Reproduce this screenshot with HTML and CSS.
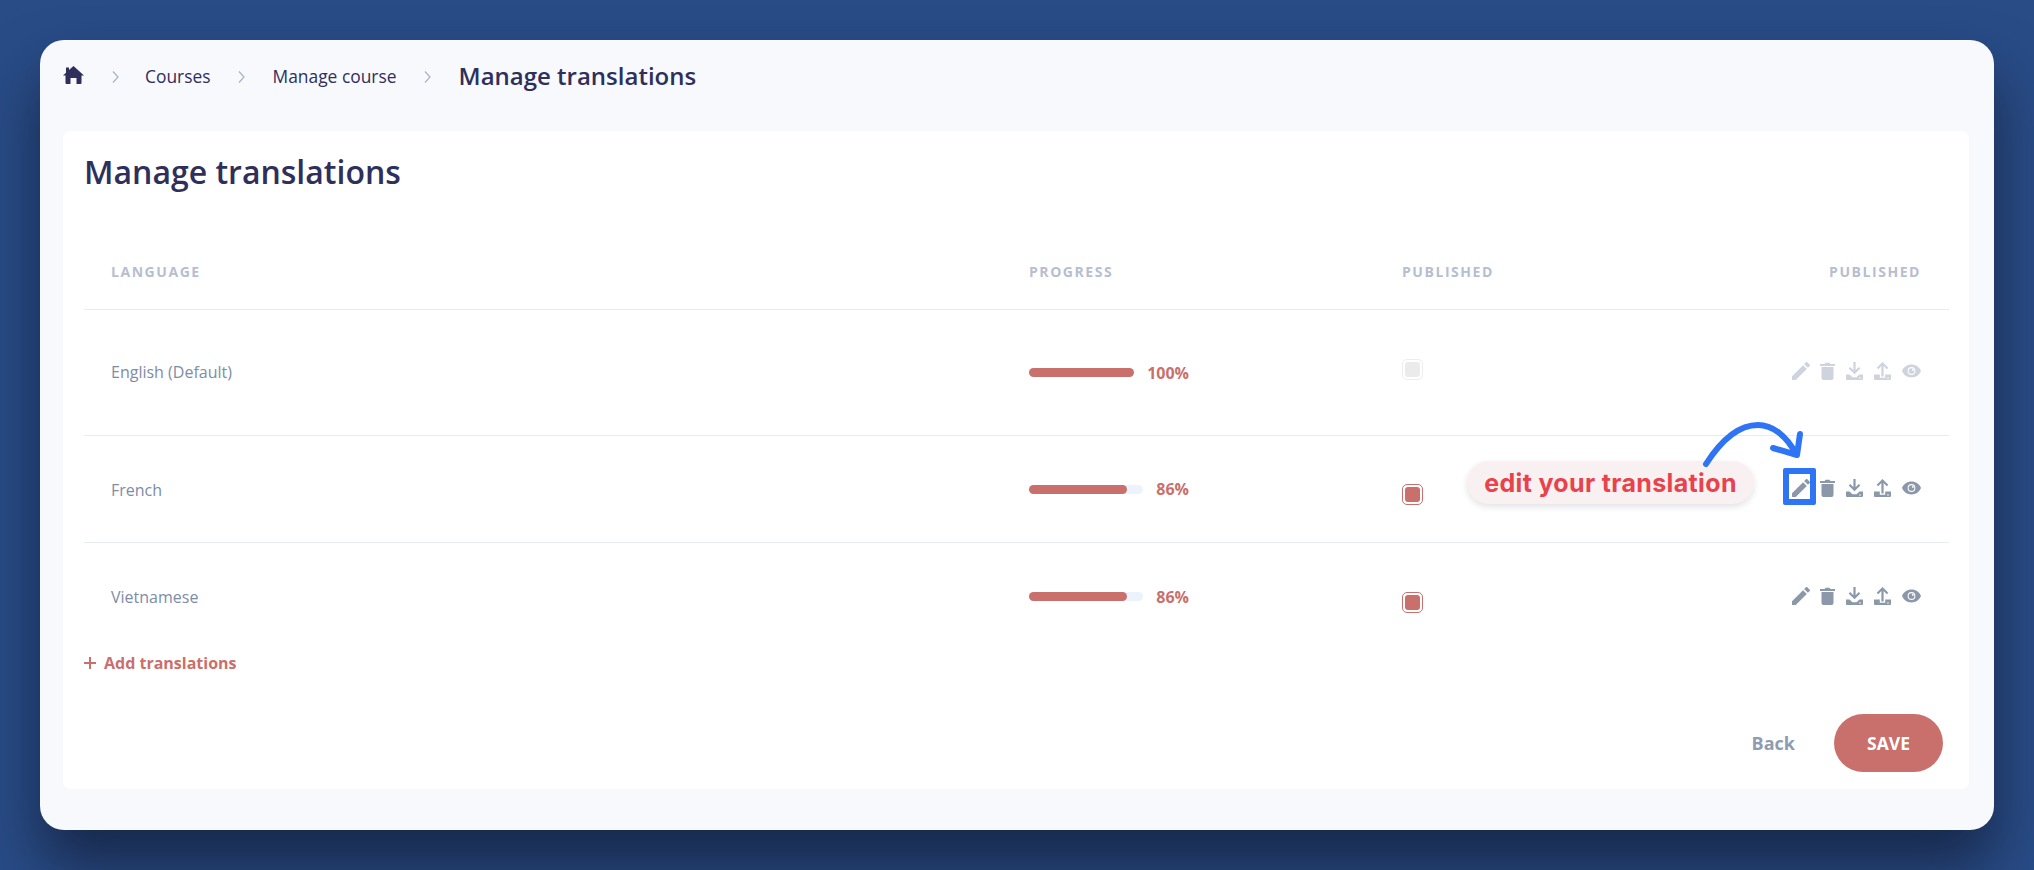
FILE: index.html
```html
<!DOCTYPE html>
<html lang="en">
<head>
<meta charset="utf-8">
<title>Manage translations</title>
<link rel="stylesheet" href="styles.css">
</head>
<body>
<svg class="defs" width="0" height="0" aria-hidden="true">
  <symbol id="i-edit" viewBox="3 3 18 18"><path d="M3 17.25V21h3.75L17.81 9.94l-3.75-3.75L3 17.25zM20.71 7.04a1 1 0 0 0 0-1.41l-2.34-2.34a1 1 0 0 0-1.41 0l-1.83 1.83 3.75 3.75 1.83-1.83z"/></symbol>
  <symbol id="i-trash" viewBox="0 0 15 18"><path d="M1.5 5h12v11a2 2 0 0 1-2 2h-8a2 2 0 0 1-2-2zM0 2h4.7l.8-1.2h4l.8 1.2H15v2H0z"/></symbol>
  <symbol id="i-down" viewBox="0 0 17 18"><path d="M7.4 0h2.2v8.2L12.8 5l1.5 1.5-5.800 5.800-5.800-5.800L4.200 5l3.200 3.200z"/><path fill-rule="evenodd" d="M0 12.500h3.500l3 2.700h4l3-2.700H17V17a1 1 0 0 1-1 1H1a1 1 0 0 1-1-1zM14 15.200a.8.8 0 1 0 0 1.600.8.8 0 0 0 0-1.600z"/></symbol>
  <symbol id="i-up" viewBox="0 0 17 18"><path d="M8.500 0l5.800 5.800-1.500 1.500-3.200-3.200v10.400H7.400V4.100L4.200 7.300 2.700 5.800z"/><path fill-rule="evenodd" d="M0 12.500h5.800v3.200h5.400v-3.200H17V17a1 1 0 0 1-1 1H1a1 1 0 0 1-1-1zM14 15.200a.8.8 0 1 0 0 1.600.8.8 0 0 0 0-1.600z"/></symbol>
  <symbol id="i-eye" viewBox="1 4.500 22 15"><path fill-rule="evenodd" d="M12 4.500C7 4.500 2.730 7.610 1 12c1.730 4.390 6 7.500 11 7.500s9.270-3.110 11-7.500c-1.730-4.390-6-7.500-11-7.500zM12 7.500a4.500 4.500 0 1 1 0 9 4.500 4.500 0 0 1 0-9z"/><path fill-rule="evenodd" d="M12 8.700a3.300 3.300 0 1 0 0 6.600 3.300 3.300 0 0 0 0-6.600zM13.500 9.600a1.100 1.100 0 1 1 0 2.200 1.100 1.100 0 0 1 0-2.200z"/></symbol>
</svg>

<main class="window">
  <nav class="crumbs">
    <svg class="home" viewBox="0 0 21 18"><path d="M10.500 0L21 9.500h-2.500V17a1 1 0 0 1-1 1h-4v-6h-6v6h-4a1 1 0 0 1-1-1V9.500H0l3-2.700V1.500h3v2.600z"/></svg>
    <svg class="chev chev-a" viewBox="0 0 7 12"><path d="M1 .5L6 6l-5 5.500"/></svg>
    <a class="crumb crumb-courses">Courses</a>
    <svg class="chev chev-b" viewBox="0 0 7 12"><path d="M1 .5L6 6l-5 5.500"/></svg>
    <a class="crumb crumb-manage">Manage course</a>
    <svg class="chev chev-c" viewBox="0 0 7 12"><path d="M1 .5L6 6l-5 5.500"/></svg>
    <span class="crumb-current">Manage translations</span>
  </nav>

  <section class="card">
    <h1 class="title">Manage translations</h1>

    <div class="row head">
      <div>LANGUAGE</div>
      <div>PROGRESS</div>
      <div>PUBLISHED</div>
      <div class="right">PUBLISHED</div>
    </div>

    <div class="row row-first">
      <div class="lang">English (Default)</div>
      <div class="progress">
        <div class="track"><div class="fill" style="width:105px"></div></div>
        <span class="pct">100%</span>
      </div>
      <div class="check check-off"><span></span></div>
      <div class="icons icons-off">
        <svg class="ic ic-edit"><use href="#i-edit"/></svg>
        <svg class="ic ic-trash"><use href="#i-trash"/></svg>
        <svg class="ic ic-down"><use href="#i-down"/></svg>
        <svg class="ic ic-up"><use href="#i-up"/></svg>
        <svg class="ic ic-eye"><use href="#i-eye"/></svg>
      </div>
    </div>

    <div class="row row-mid">
      <div class="lang">French</div>
      <div class="progress">
        <div class="track"><div class="fill" style="width:98px"></div></div>
        <span class="pct">86%</span>
      </div>
      <div class="check check-on"><span></span></div>
      <div class="icons">
        <svg class="ic ic-edit"><use href="#i-edit"/></svg>
        <svg class="ic ic-trash"><use href="#i-trash"/></svg>
        <svg class="ic ic-down"><use href="#i-down"/></svg>
        <svg class="ic ic-up"><use href="#i-up"/></svg>
        <svg class="ic ic-eye"><use href="#i-eye"/></svg>
      </div>
      <div class="pill">edit your translation</div>
      <div class="focus-box"></div>
      <svg class="arrow" viewBox="0 0 110 60"><path d="M6 47C22 22 40 8 58 8c14 0 28 10 38 29M100 17l-3 21-24-7"/></svg>
    </div>

    <div class="row row-last">
      <div class="lang">Vietnamese</div>
      <div class="progress">
        <div class="track"><div class="fill" style="width:98px"></div></div>
        <span class="pct">86%</span>
      </div>
      <div class="check check-on"><span></span></div>
      <div class="icons">
        <svg class="ic ic-edit"><use href="#i-edit"/></svg>
        <svg class="ic ic-trash"><use href="#i-trash"/></svg>
        <svg class="ic ic-down"><use href="#i-down"/></svg>
        <svg class="ic ic-up"><use href="#i-up"/></svg>
        <svg class="ic ic-eye"><use href="#i-eye"/></svg>
      </div>
    </div>

    <a class="add"><svg class="plus" viewBox="0 0 12 12"><path d="M6 0v12M0 6h12"/></svg>Add translations</a>

    <div class="footer">
      <a class="back">Back</a>
      <button class="save" type="button">SAVE</button>
    </div>
  </section>
</main>
</body>
</html>
```

FILE: styles.css
```css
* { box-sizing: border-box; }
html, body { margin: 0; height: 100%; }
body {
  padding: 40px;
  width: 2034px;
  height: 870px;
  overflow: hidden;
  background: #294c87;
  font-family: "Open Sans", "Liberation Sans", sans-serif;
  color: #2f2f5b;
}
.defs { position: absolute; }

.window {
  display: flex;
  flex-direction: column;
  height: 790px;
  padding: 0 25px 41px 23px;
  background: #f7f9fd;
  border-radius: 24px;
  box-shadow: 0 36px 60px rgba(12, 16, 34, .6);
}

.crumbs {
  display: flex;
  align-items: center;
  height: 72px;
  margin-bottom: 19px;
  flex: none;
  padding-bottom: 1px;
}
.home { width: 21px; height: 18px; fill: #2f2f5b; margin-top: -1px; }
.chev { width: 7px; height: 12px; fill: none; stroke: #a9b2c6; stroke-width: 1.200; margin-top: 2px; }
.chev-a { margin-left: 28px; }
.chev-b { margin-left: 27px; }
.chev-c { margin-left: 27px; }
.crumb { font-size: 17.4px; color: #2f2f5b; }
.crumb-courses { margin-left: 26px; }
.crumb-manage { margin-left: 28px; }
.crumb-current { margin-left: 28px; font-size: 24px; font-weight: 600; color: #2f2f5b; }

.card {
  flex: 1;
  display: flex;
  flex-direction: column;
  padding: 19px 20px 0 21px;
  background: #fff;
  border-radius: 8px;
}
.title {
  margin: 0 0 39px;
  height: 44px;
  font-size: 32px;
  line-height: 44px;
  font-weight: 600;
  color: #2f2f5b;
}

.row {
  position: relative;
  display: grid;
  grid-template-columns: 918px 373px 1fr;
  grid-auto-flow: column;
  align-items: center;
  padding: 0 28px 0 27px;
  border-bottom: 1px solid #e7ecf0;
}
.head {
  height: 77px;
  font-size: 14px;
  font-weight: 700;
  letter-spacing: 1.550px;
  color: #b6bed0;
}
.right { justify-self: end; }
.row-first { height: 126px; }
.row-mid { height: 107px; }
.row-last { height: 107px; border-bottom: 0; }

.lang { font-size: 16px; color: #7e8ca6; }
.row-first .lang { margin-bottom: 2px; }
.row-mid .lang, .row-last .lang { margin-top: 1px; }

.progress {
  display: flex;
  align-items: center;
  justify-content: space-between;
  width: 160px;
}
.track { width: 114px; height: 9px; border-radius: 5px; background: #edf3fc; }
.row-first .track { background: transparent; }
.fill { height: 100%; border-radius: 5px; background: #c9706c; }
.pct { font-size: 16px; font-weight: 700; color: #c9706c; }

.check {
  width: 21px;
  height: 21px;
  padding: 2px;
  border: 1px solid #c9706c;
  border-radius: 5px;
  background: #fff;
}
.check span { display: block; width: 100%; height: 100%; border-radius: 3px; background: #c9706c; }
.check-on { margin-top: 11px; }
.check-off { margin-bottom: 7px; border-color: #ededed; }
.check-off span { background: #ebebeb; }

.icons {
  display: flex;
  justify-content: flex-end;
  align-items: center;
  gap: 11px;
  fill: #8b98aa;
  margin-bottom: 3px;
}
.row-last .icons { margin-bottom: 1px; }
.row-first .icons { margin-bottom: 3px; }
.icons-off { fill: #ced3de; }
.ic { display: block; height: 18px; }
.ic-edit { width: 18px; margin-right: -1px; }
.ic-trash { width: 15px; }
.ic-down, .ic-up { width: 17px; }
.ic-eye { width: 19px; height: 14px; }

.pill {
  position: absolute;
  left: 1383px;
  top: 25px;
  width: 287px;
  height: 43px;
  border-radius: 22px;
  background: #f9f0f2;
  box-shadow: 0 3px 6px rgba(60, 60, 80, .14);
  font-family: Inter, "Liberation Sans", sans-serif;
  font-size: 25px;
  font-weight: 700;
  line-height: 45px;
  text-align: center;
  letter-spacing: .35px;
  color: #e8434a;
}
.focus-box {
  position: absolute;
  left: 1699px;
  top: 32px;
  width: 33px;
  height: 37px;
  border: 6px solid #2f74f5;
  border-radius: 2px;
}
.arrow {
  position: absolute;
  left: 1616px;
  top: -19px;
  width: 110px;
  height: 60px;
  fill: none;
  stroke: #2f74f5;
  stroke-width: 6;
  stroke-linecap: round;
  stroke-linejoin: round;
}

.add {
  display: flex;
  align-items: center;
  height: 22px;
  margin-top: 2px;
  font-size: 16px;
  font-weight: 700;
  color: #c9706c;
}
.plus { width: 12px; height: 12px; margin-right: 8px; stroke: #c9706c; stroke-width: 2; fill: none; }

.footer {
  display: flex;
  justify-content: flex-end;
  align-items: center;
  gap: 39px;
  margin-top: 40px;
  padding-right: 6px;
}
.back { font-size: 18px; font-weight: 700; color: #8f9cb0; }
.save {
  width: 109px;
  height: 58px;
  border: 0;
  border-radius: 29px;
  background: #c9706c;
  color: #fff;
  font-family: inherit;
  font-size: 17.5px;
  font-weight: 700;
}
```
